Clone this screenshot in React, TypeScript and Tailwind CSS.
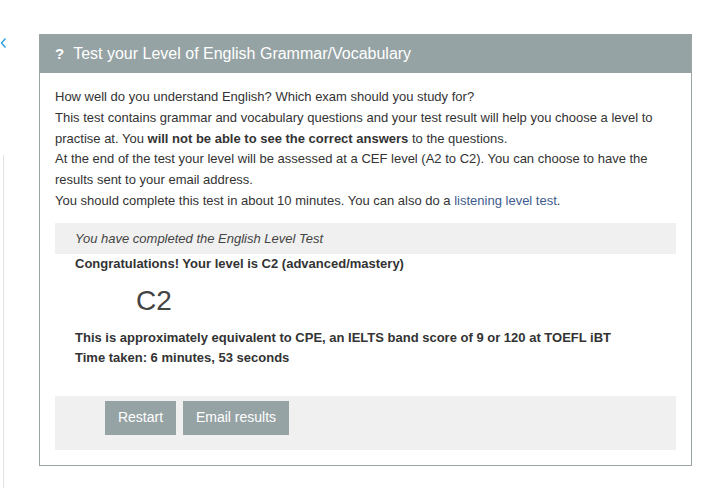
import * as React from "react";

export default function App() {
  return (
    <div className="flex min-h-[488px] w-[707px] bg-white pt-[34px] font-['Liberation_Sans',Arial,sans-serif] text-[#333]">
      {/* sidebar stub on the left edge */}
      <div className="flex w-[39px] flex-col">
        <svg width="8" height="12" viewBox="0 0 8 12" className="mt-[3px]">
          <path d="M5.5 1.5 L1.5 6 L5.5 10.5" fill="none" stroke="#2a9fd6" strokeWidth="1.4" />
        </svg>
        <div className="mt-[106px] h-[340px] w-[4px] border-r border-[#e2e2e2]" />
      </div>

      <div className="h-[432px] w-[653px] border border-[#9aa4a4]">
        <div className="flex h-[38px] items-center gap-[9px] bg-[#95a3a4] px-[15px] text-white">
          <span className="text-[15px] font-bold">?</span>
          <span className="text-[16px]">Test your Level of English Grammar/Vocabulary</span>
        </div>

        <div className="px-[15px] pt-[14px]">
          <p className="text-[13px] leading-[20.8px]">
            How well do you understand English? Which exam should you study for?
            <br />
            This test contains grammar and vocabulary questions and your test result will help you choose a level to
            practise at. You <b>will not be able to see the correct answers</b> to the questions.
            <br />
            At the end of the test your level will be assessed at a CEF level (A2 to C2). You can choose to have the
            results sent to your email address.
            <br />
            You should complete this test in about 10 minutes. You can also do a{" "}
            <span className="text-[#3e5b8e]">listening level test</span>.
          </p>

          <div className="mt-[11px] flex h-[31px] items-center bg-[#f0f0f0] px-[20px] text-[13px] italic text-[#444]">
            You have completed the English Level Test
          </div>

          <div className="px-[20px] text-[13px]">
            <div className="font-bold leading-[20px]">Congratulations! Your level is C2 (advanced/mastery)</div>
            <div className="flex h-[54px] items-center pl-[61px] text-[28px] text-[#444]">C2</div>
            <div className="font-bold leading-[20px]">
              This is approximately equivalent to CPE, an IELTS band score of 9 or 120 at TOEFL iBT
            </div>
            <div className="font-bold leading-[20px]">Time taken: 6 minutes, 53 seconds</div>
          </div>

          <div className="mt-[28px] flex h-[54px] gap-[7px] bg-[#f0f0f0] pl-[50px] pt-[5px]">
            <button className="h-[34px] w-[71px] bg-[#95a3a4] text-[14px] text-white">Restart</button>
            <button className="h-[34px] w-[106px] bg-[#95a3a4] text-[14px] text-white">Email results</button>
          </div>
        </div>
      </div>
    </div>
  );
}
